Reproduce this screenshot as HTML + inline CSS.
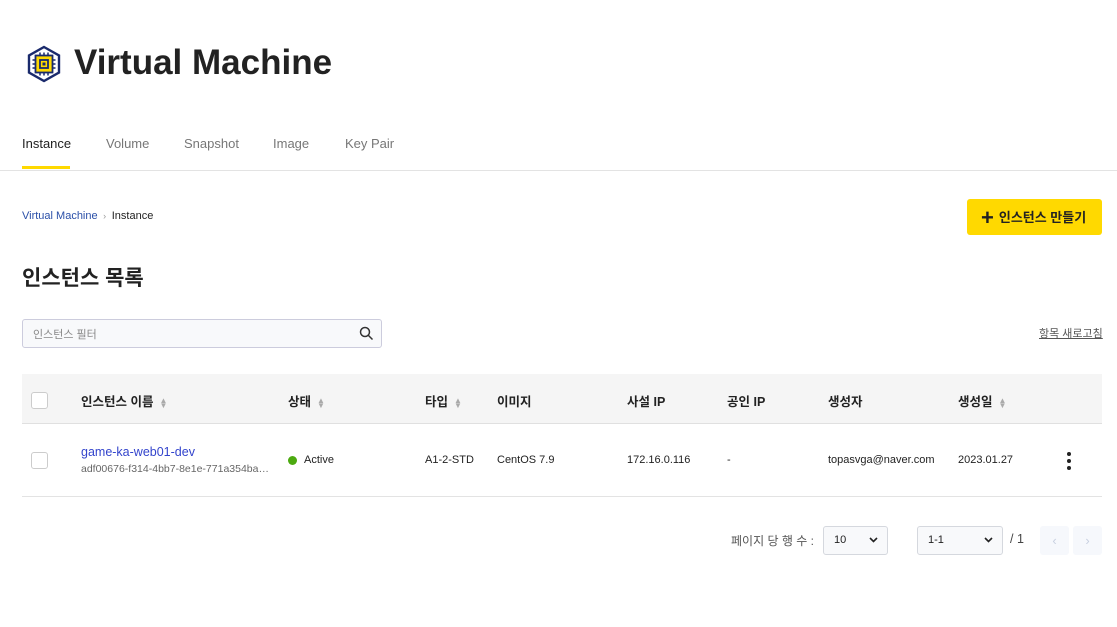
<!DOCTYPE html>
<html><head><meta charset="utf-8"><style>
*{box-sizing:border-box;margin:0;padding:0}
body{width:1117px;height:627px;background:#fff;font-family:"Liberation Sans","Noto Sans CJK KR",sans-serif;color:#222;position:relative;overflow:hidden}
.a{position:absolute;white-space:nowrap}
.tab{position:absolute;top:136px;font-size:13px;color:#777}
.cb{position:absolute;width:17px;height:17px;border:1px solid #ccc;border-radius:3px;background:#fff}
.h{position:absolute;top:391px;font-size:12.5px;font-weight:bold;color:#222}
.s{display:inline-block;margin-left:6px;color:#aaa;font-size:8px;vertical-align:middle;line-height:5px}
.c{position:absolute;top:454px;font-size:11px;color:#222}
.sel{position:absolute;top:526px;height:29px;border:1px solid #d5d8de;border-radius:3px;background:#f8f9fb;font-size:11px;padding:7px 10px}
.chev{position:absolute;right:9px;top:10px}
</style></head><body>
<svg class="a" style="left:25px;top:45px" width="38" height="38" viewBox="0 0 38 38">
<polygon points="19,2 34,10.5 34,27.5 19,36 4,27.5 4,10.5" fill="#fff" stroke="#1a2a6c" stroke-width="2.4"/>
<rect x="10.5" y="10.5" width="17" height="17" fill="#ffd900" stroke="#1a2a6c" stroke-width="1.8"/>
<rect x="15" y="15" width="8" height="8" fill="#ffd900" stroke="#1a2a6c" stroke-width="1.8"/>
<rect x="17.5" y="17.5" width="3" height="3" fill="#1a2a6c"/>
<g stroke="#1a2a6c" stroke-width="1.5"><path d="M15 7.5v3M19 7.5v3M23 7.5v3M15 27.5v3M19 27.5v3M23 27.5v3M7.5 15h3M7.5 19h3M7.5 23h3M27.5 15h3M27.5 19h3M27.5 23h3"/></g>
</svg>
<div class="a" style="left:74px;top:43px;font-size:35px;font-weight:bold;color:#222">Virtual Machine</div>
<div class="tab" style="left:22px;color:#222">Instance</div>
<div class="a" style="left:22px;top:166px;width:48px;height:3px;background:#ffd900"></div>
<div class="tab" style="left:106px">Volume</div>
<div class="tab" style="left:184px">Snapshot</div>
<div class="tab" style="left:273px">Image</div>
<div class="tab" style="left:345px">Key Pair</div>
<div class="a" style="left:0;top:170px;width:1117px;height:1px;background:#e3e3e3"></div>
<div class="a" style="left:22px;top:210px;font-size:11px;color:#2a4fa8">Virtual Machine <span style="color:#999;font-size:9px">&nbsp;›&nbsp;</span> <span style="color:#222">Instance</span></div>
<div class="a" style="left:967px;top:199px;width:135px;height:36px;background:#ffd900;border-radius:3px;font-size:13px;font-weight:bold;padding:8px 0 0 14px;color:#222"><span style="font-size:22px;vertical-align:-3px;margin-right:5px;line-height:18px">+</span>인스턴스 만들기</div>
<div class="a" style="left:22px;top:262px;font-size:21px;font-weight:bold">인스턴스 목록</div>
<div class="a" style="left:22px;top:319px;width:360px;height:29px;border:1px solid #ccd;border-radius:3px;background:#f8f9fb;font-size:11px;color:#888;padding:6px 10px">인스턴스 필터
<svg style="position:absolute;right:7px;top:6px" width="15" height="15" viewBox="0 0 15 15"><circle cx="6" cy="6" r="4.5" fill="none" stroke="#333" stroke-width="1.5"/><path d="M9.5 9.5l4 4" stroke="#333" stroke-width="1.5"/></svg></div>
<div class="a" style="left:1039px;top:325px;font-size:11px;color:#555;text-decoration:underline">항목 새로고침</div>
<div class="a" style="left:22px;top:374px;width:1080px;height:50px;background:#f5f5f5;border-bottom:1px solid #e0e0e0"></div>
<div class="cb" style="left:31px;top:392px"></div>
<div class="h" style="left:81px">인스턴스 이름<span class="s">▲<br>▼</span></div>
<div class="h" style="left:288px">상태<span class="s">▲<br>▼</span></div>
<div class="h" style="left:425px">타입<span class="s">▲<br>▼</span></div>
<div class="h" style="left:497px">이미지</div>
<div class="h" style="left:627px">사설 IP</div>
<div class="h" style="left:727px">공인 IP</div>
<div class="h" style="left:828px">생성자</div>
<div class="h" style="left:958px">생성일<span class="s">▲<br>▼</span></div>
<div class="cb" style="left:31px;top:452px"></div>
<div class="a" style="left:81px;top:445px;font-size:12.5px;color:#3344cc">game-ka-web01-dev</div>
<div class="a" style="left:81px;top:463px;font-size:10.5px;color:#666">adf00676-f314-4bb7-8e1e-771a354ba…</div>
<div class="a" style="left:288px;top:456px;width:9px;height:9px;border-radius:50%;background:#4caa10"></div>
<div class="c" style="left:304px">Active</div>
<div class="c" style="left:425px">A1-2-STD</div>
<div class="c" style="left:497px">CentOS 7.9</div>
<div class="c" style="left:627px">172.16.0.116</div>
<div class="c" style="left:727px">-</div>
<div class="c" style="left:828px">topasvga@naver.com</div>
<div class="c" style="left:958px">2023.01.27</div>
<div class="a" style="left:1067px;top:452px;width:4px">
<div style="width:4px;height:4px;border-radius:50%;background:#222;margin-bottom:3px"></div><div style="width:4px;height:4px;border-radius:50%;background:#222;margin-bottom:3px"></div><div style="width:4px;height:4px;border-radius:50%;background:#222"></div></div>
<div class="a" style="left:22px;top:496px;width:1080px;height:1px;background:#e3e3e3"></div>
<div class="a" style="left:731px;top:532px;font-size:12px;color:#555">페이지 당 행 수 :</div>
<div class="sel" style="left:823px;width:65px">10<svg class="chev" width="9" height="6" viewBox="0 0 9 6"><path d="M1 1l3.5 3.5L8 1" fill="none" stroke="#222" stroke-width="1.6"/></svg></div>
<div class="sel" style="left:917px;width:86px">1-1<svg class="chev" width="9" height="6" viewBox="0 0 9 6"><path d="M1 1l3.5 3.5L8 1" fill="none" stroke="#222" stroke-width="1.6"/></svg></div>
<div class="a" style="left:1010px;top:532px;font-size:12.5px;color:#444">/ 1</div>
<div class="a" style="left:1040px;top:526px;width:29px;height:29px;background:#f6f8fc;border-radius:3px;color:#c8d0e0;font-size:13px;text-align:center;line-height:29px">‹</div>
<div class="a" style="left:1073px;top:526px;width:29px;height:29px;background:#f6f8fc;border-radius:3px;color:#c8d0e0;font-size:13px;text-align:center;line-height:29px">›</div>
</body></html>
